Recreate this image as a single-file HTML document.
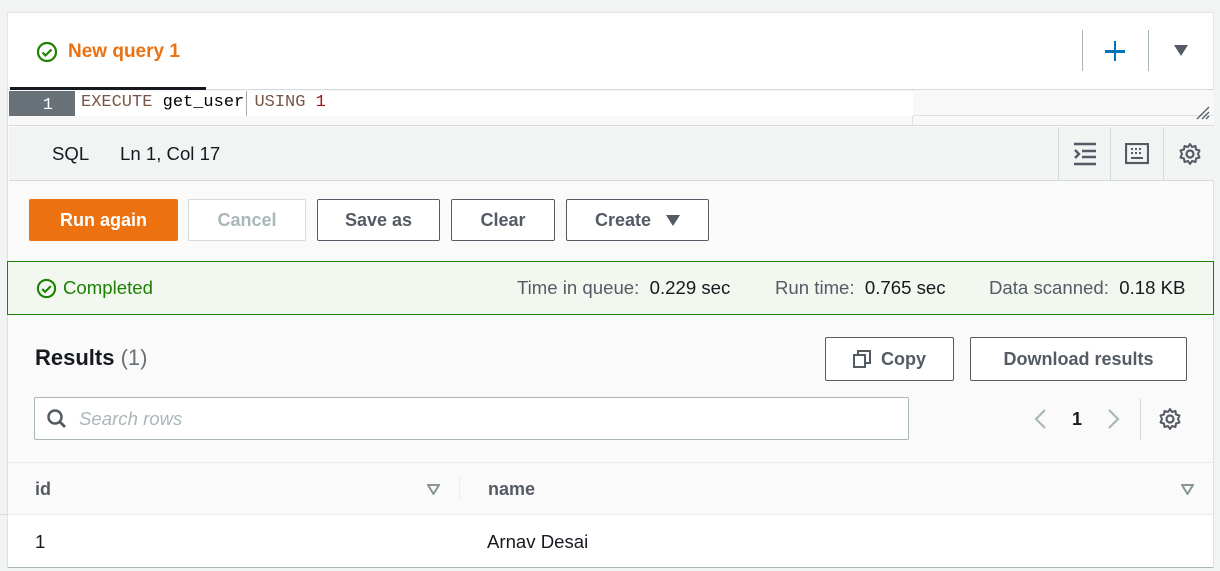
<!DOCTYPE html>
<html><head><style>
*{box-sizing:border-box;margin:0;padding:0}
body{width:1220px;height:571px;background:#f2f3f3;font-family:"Liberation Sans",sans-serif;color:#16191f;position:relative;overflow:hidden}
.a{position:absolute}
.btn{position:absolute;top:199px;height:42px;border:1px solid #545b64;border-radius:2px;background:#fff;font-weight:bold;font-size:18px;color:#545b64;display:flex;align-items:center;justify-content:center}
.mono{font-family:"Liberation Mono",monospace}
.t{font-size:18.6px}
</style></head><body>
<div class="a" style="left:7px;top:12px;width:1207px;height:556px;background:#fafafa;border:1px solid #e0e0e0"></div>
<div class="a" style="left:7px;top:12px;width:1207px;height:78px;background:#fff;border:1px solid #e6e6e6;border-bottom:1px solid #d5dbdb"></div>
<svg class="a" style="left:36px;top:41px" width="22" height="22" viewBox="0 0 22 22"><circle cx="11" cy="11" r="9" fill="none" stroke="#1d8102" stroke-width="2.2"/><path d="M6.5 11.5l3 3 6-6" fill="none" stroke="#1d8102" stroke-width="2.2"/></svg>
<div class="a" style="left:68px;top:41px;font-size:19px;font-weight:bold;color:#ec7211">New query 1</div>
<div class="a" style="left:10px;top:87px;width:196px;height:3px;background:#16191f"></div>
<div class="a" style="left:1082px;top:30px;width:1px;height:41px;background:#aab7b8"></div>
<div class="a" style="left:1148px;top:30px;width:1px;height:41px;background:#aab7b8"></div>
<div class="a" style="left:1105px;top:50px;width:20px;height:2.5px;background:#0073bb"></div>
<div class="a" style="left:1113.7px;top:41px;width:2.5px;height:20px;background:#0073bb"></div>
<svg class="a" style="left:1174px;top:45px" width="14" height="12"><path d="M0 0h14L7 11z" fill="#545b64"/></svg>
<!-- editor -->
<div class="a" style="left:9px;top:90px;width:1205px;height:36px;background:#f8f8f8;border-bottom:1px solid #d5dbdb"></div>
<div class="a" style="left:9px;top:115px;width:1205px;height:1px;background:#e0e0e0"></div>
<div class="a" style="left:912px;top:90px;width:1px;height:36px;background:#e0e0e0"></div>
<div class="a" style="left:9px;top:91px;width:66px;height:25px;background:#687078;color:#fff;font-size:17px;text-align:right;padding-right:22px;line-height:25px"><span class="mono">1</span></div>
<div class="a" style="left:75px;top:91px;width:838px;height:25px;background:#fff"></div>
<div class="a" style="left:246px;top:91px;width:1px;height:25px;background:#aaa"></div>
<div class="a mono" style="left:81px;top:93px;font-size:17px;line-height:20px;white-space:pre"><span style="color:#795548">EXECUTE</span> <span style="color:#000">get_user</span> <span style="color:#795548">USING</span> <span style="color:#a31515">1</span></div>
<svg class="a" style="left:1195px;top:106px" width="16" height="14"><path d="M2 13L14 1M7 13L14 6M11 13l3-3" stroke="#545b64" stroke-width="1.3"/></svg>
<!-- status -->
<div class="a" style="left:9px;top:127px;width:1205px;height:54px;background:#f2f3f3;border-bottom:1px solid #d5dbdb"></div>
<div class="a t" style="left:52px;top:143px">SQL</div>
<div class="a t" style="left:120px;top:143px">Ln 1, Col 17</div>
<div class="a" style="left:1058px;top:127px;width:1px;height:54px;background:#d5dbdb"></div>
<div class="a" style="left:1110px;top:127px;width:1px;height:54px;background:#d5dbdb"></div>
<div class="a" style="left:1163px;top:127px;width:1px;height:54px;background:#d5dbdb"></div>
<svg class="a" style="left:1073px;top:142px" width="24" height="24"><path d="M1 2h22M9 9h14M9 15h14M1 22h22M2 8l4 4-4 4" stroke="#545b64" stroke-width="2.4" fill="none"/></svg>
<svg class="a" style="left:1125px;top:143px" width="24" height="22"><rect x="1" y="1" width="22" height="19" fill="none" stroke="#545b64" stroke-width="2.2"/><path d="M6 6h2M10 6h2M14 6h2M6 10h2M10 10h2M14 10h2M6 15h12" stroke="#545b64" stroke-width="2"/></svg>
<svg class="a" style="left:1178px;top:142px" width="24" height="24" viewBox="0 0 24 24"><circle cx="12" cy="12" r="3.5" fill="none" stroke="#545b64" stroke-width="2.2"/><path d="M12 2l2 3 3.5-1 .5 3.5 3.5 1-1.5 3.5 1.5 3.5-3.5 1-.5 3.5-3.5-1-2 3-2-3-3.5 1-.5-3.5-3.5-1L4 12 2.5 8.5 6 7.5 6.5 4 10 5z" fill="none" stroke="#545b64" stroke-width="2" stroke-linejoin="round"/></svg>
<!-- buttons -->
<div class="btn" style="left:29px;width:149px;background:#ec7211;border-color:#ec7211;color:#fff">Run again</div>
<div class="btn" style="left:188px;width:118px;border-color:#d5dbdb;color:#aab7b8">Cancel</div>
<div class="btn" style="left:317px;width:123px">Save as</div>
<div class="btn" style="left:451px;width:104px">Clear</div>
<div class="btn" style="left:566px;width:143px">Create&nbsp;&nbsp;&nbsp;<svg width="14" height="11"><path d="M0 0h14L7 11z" fill="#545b64"/></svg></div>
<!-- completed -->
<div class="a" style="left:7px;top:261px;width:1207px;height:54px;background:#f2f8f0;border:1px solid #1d8102"></div>
<svg class="a" style="left:36px;top:278px" width="21" height="21" viewBox="0 0 22 22"><circle cx="11" cy="11" r="9" fill="none" stroke="#1d8102" stroke-width="2.2"/><path d="M6.5 11.5l3 3 6-6" fill="none" stroke="#1d8102" stroke-width="2.2"/></svg>
<div class="a t" style="left:63px;top:277px;color:#1d8102">Completed</div>
<div class="a t" style="left:517px;top:277px;color:#545b64">Time in queue:&nbsp; <span style="color:#16191f">0.229 sec</span></div>
<div class="a t" style="left:775px;top:277px;color:#545b64">Run time:&nbsp; <span style="color:#16191f">0.765 sec</span></div>
<div class="a t" style="left:989px;top:277px;color:#545b64">Data scanned:&nbsp; <span style="color:#16191f">0.18 KB</span></div>
<!-- results -->
<div class="a" style="left:35px;top:345px;font-size:22px;font-weight:bold">Results <span style="font-weight:normal;color:#687078">(1)</span></div>
<div class="btn" style="left:825px;top:337px;width:129px;height:44px"><svg width="18" height="18" style="margin-right:10px"><rect x="1" y="5" width="11" height="12" fill="none" stroke="#545b64" stroke-width="2"/><path d="M5 5V1h12v12h-5" fill="none" stroke="#545b64" stroke-width="2"/></svg>Copy</div>
<div class="btn" style="left:970px;top:337px;width:217px;height:44px">Download results</div>
<div class="a" style="left:34px;top:397px;width:875px;height:43px;background:#fff;border:1px solid #aab7b8;border-radius:2px"></div>
<svg class="a" style="left:46px;top:408px" width="22" height="22"><circle cx="9" cy="9" r="6.5" fill="none" stroke="#545b64" stroke-width="2.5"/><path d="M14 14l5 5" stroke="#545b64" stroke-width="2.8"/></svg>
<div class="a t" style="left:79px;top:408px;font-style:italic;color:#aab7b8">Search rows</div>
<svg class="a" style="left:1033px;top:408px" width="14" height="22"><path d="M12 2L3 11l9 9" fill="none" stroke="#aab7b8" stroke-width="2.2"/></svg>
<div class="a" style="left:1072px;top:409px;font-size:18px;font-weight:bold">1</div>
<svg class="a" style="left:1107px;top:408px" width="14" height="22"><path d="M2 2l9 9-9 9" fill="none" stroke="#aab7b8" stroke-width="2.2"/></svg>
<div class="a" style="left:1140px;top:398px;width:1px;height:42px;background:#d5dbdb"></div>
<svg class="a" style="left:1158px;top:407px" width="24" height="24" viewBox="0 0 24 24"><circle cx="12" cy="12" r="3.5" fill="none" stroke="#545b64" stroke-width="2.2"/><path d="M12 2l2 3 3.5-1 .5 3.5 3.5 1-1.5 3.5 1.5 3.5-3.5 1-.5 3.5-3.5-1-2 3-2-3-3.5 1-.5-3.5-3.5-1L4 12 2.5 8.5 6 7.5 6.5 4 10 5z" fill="none" stroke="#545b64" stroke-width="2" stroke-linejoin="round"/></svg>
<!-- table -->
<div class="a" style="left:8px;top:462px;width:1205px;height:1px;background:#eaeded"></div>
<div class="a" style="left:8px;top:514px;width:1205px;height:54px;background:#fff;border-top:1px solid #eaeded;border-bottom:1px solid #aab7b8"></div>
<div class="a" style="left:0;top:514px;width:8px;height:1px;background:#d5dbdb"></div>
<div class="a" style="left:35px;top:479px;font-size:18px;font-weight:bold;color:#545b64">id</div>
<svg class="a" style="left:427px;top:484px" width="13" height="11"><path d="M1 1h11L6.5 10z" fill="none" stroke="#879596" stroke-width="2"/></svg>
<div class="a" style="left:459px;top:476px;width:1px;height:25px;background:#eaeded"></div>
<div class="a" style="left:488px;top:479px;font-size:18px;font-weight:bold;color:#545b64">name</div>
<svg class="a" style="left:1181px;top:484px" width="13" height="11"><path d="M1 1h11L6.5 10z" fill="none" stroke="#879596" stroke-width="2"/></svg>
<div class="a t" style="left:35px;top:531px">1</div>
<div class="a t" style="left:487px;top:531px">Arnav Desai</div>
</body></html>
